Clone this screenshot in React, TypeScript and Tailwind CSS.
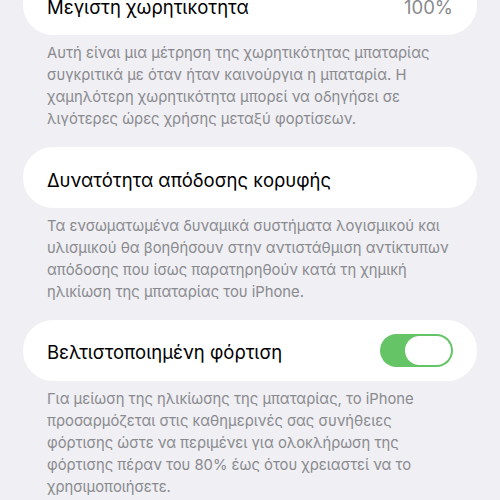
import React from 'react';

const Toggle: React.FC = () => (
  <div className="w-[73px] h-[33px] rounded-full bg-[#65c466] p-[2px] flex justify-end">
    <div className="w-[46px] h-[29px] rounded-full bg-white" />
  </div>
);

const Footer: React.FC<{ text: string[] }> = ({ text }) => (
  <div className="px-[47px] pt-[7px] pb-[17px] text-[14.8px] leading-[22px] text-[#8a8a8e]">
    {text.map((line, i) => (
      <div key={i} className="whitespace-nowrap">{line}</div>
    ))}
  </div>
);

const Row: React.FC<{ children: React.ReactNode }> = ({ children }) => (
  <div className="mx-[23px] h-[61px] rounded-[30px] bg-white flex items-center justify-between pl-[24px] pr-[24px]">
    {children}
  </div>
);

const App: React.FC = () => {
  return (
    <div
      className="w-[500px] h-[500px] overflow-hidden bg-[#efeff4]"
      style={{ fontFamily: 'Inter, "Noto Sans", sans-serif' }}
    >
      <div className="mt-[-26px]">
        <Row>
          <span className="text-[18.5px] text-black pt-[6px]">Μεγιστη χωρητικοτητα</span>
          <span className="text-[18.5px] text-[#8a8a8e] pt-[6px]">100%</span>
        </Row>
        <Footer
          text={[
            'Αυτή είναι μια μέτρηση της χωρητικότητας μπαταρίας',
            'συγκριτικά με όταν ήταν καινούργια η μπαταρία. Η',
            'χαμηλότερη χωρητικότητα μπορεί να οδηγήσει σε',
            'λιγότερες ώρες χρήσης μεταξύ φορτίσεων.',
          ]}
        />

        <Row>
          <span className="text-[18.5px] text-black pt-[6px]">Δυνατότητα απόδοσης κορυφής</span>
        </Row>
        <Footer
          text={[
            'Τα ενσωματωμένα δυναμικά συστήματα λογισμικού και',
            'υλισμικού θα βοηθήσουν στην αντιστάθμιση αντίκτυπων',
            'απόδοσης που ίσως παρατηρηθούν κατά τη χημική',
            'ηλικίωση της μπαταρίας του iPhone.',
          ]}
        />

        <Row>
          <span className="text-[18.5px] text-black pt-[4px]">Βελτιστοποιημένη φόρτιση</span>
          <Toggle />
        </Row>
        <Footer
          text={[
            'Για μείωση της ηλικίωσης της μπαταρίας, το iPhone',
            'προσαρμόζεται στις καθημερινές σας συνήθειες',
            'φόρτισης ώστε να περιμένει για ολοκλήρωση της',
            'φόρτισης πέραν του 80% έως ότου χρειαστεί να το',
            'χρησιμοποιήσετε.',
          ]}
        />
      </div>
    </div>
  );
};

export default App;
